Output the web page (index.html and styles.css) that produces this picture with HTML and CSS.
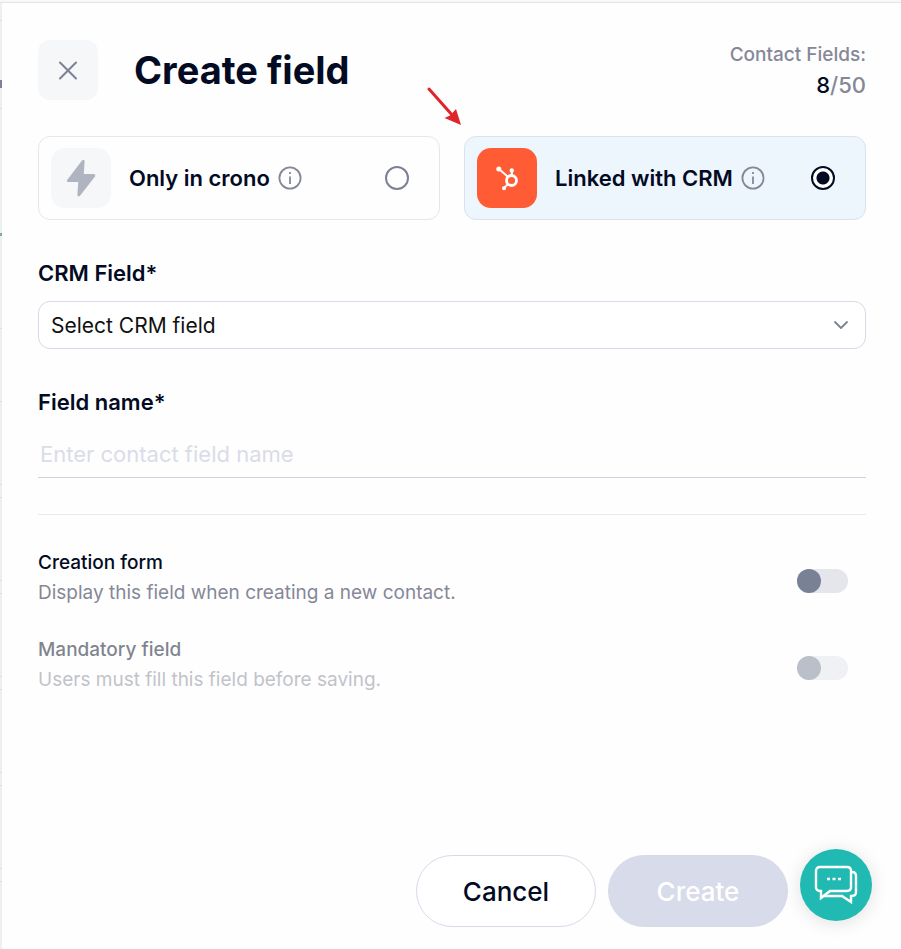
FILE: index.html
```html
<!DOCTYPE html>
<html lang="en">
<head>
<meta charset="utf-8">
<meta name="viewport" content="width=device-width, initial-scale=1">
<title>Create field</title>
<link rel="stylesheet" href="styles.css">
</head>
<body>
<div class="backdrop">
  <form class="panel">
    <header class="header">
      <button class="close" type="button" aria-label="Close">
        <svg width="20" height="20" viewBox="0 0 20 20" fill="none" stroke="#7c8194" stroke-width="2" stroke-linecap="round"><path d="M2 2.500 18 18.500M18 2.500 2 18.500"/></svg>
      </button>
      <h1 class="title">Create field</h1>
      <div class="quota">
        <span class="quota-label">Contact Fields:</span>
        <span class="quota-value"><b class="quota-used">8</b>/50</span>
      </div>
    </header>

    <div class="options">
      <label class="option">
        <span class="tile">
          <svg width="32" height="40" viewBox="0 0 32 40"><path d="M17 2.400 2 22.200Q1.200 23.800 3 24H13.200L12.400 37Q13 39.400 15 37.800L30.200 18.200Q31 16.400 29 16H18.800L19.600 3Q18.800.600 17 2.400Z" fill="#b0b4c0"/></svg>
        </span>
        <span class="option-name">Only in crono</span>
        <svg class="info" width="24" height="24" viewBox="0 0 24 24" fill="none" stroke="#858897" stroke-width="1.800"><circle cx="12" cy="12" r="10.600"/><path d="M12 10.500V18M12 6V8"/></svg>
        <input class="radio" type="radio" name="source">
      </label>
      <label class="option option-active">
        <span class="tile tile-hubspot">
          <svg width="24" height="26" viewBox="0 0 24 26" fill="none" stroke="#fff" stroke-width="2"><circle cx="16.500" cy="15.500" r="5" stroke-width="2.800"/><path d="M4 4 12.800 11.700M16.800 5.500V10M12.800 19.200 9 23"/><g fill="#fff" stroke="none"><circle cx="3.800" cy="4" r="2.500"/><circle cx="16.800" cy="5.400" r="2.200"/><circle cx="9" cy="23.200" r="2"/></g></svg>
        </span>
        <span class="option-name">Linked with CRM</span>
        <svg class="info" width="24" height="24" viewBox="0 0 24 24" fill="none" stroke="#858897" stroke-width="1.800"><circle cx="12" cy="12" r="10.600"/><path d="M12 10.500V18M12 6V8"/></svg>
        <input class="radio" type="radio" name="source" checked>
      </label>
      <svg class="arrow" width="36" height="40" viewBox="0 0 36 40"><path d="M2 3 26 30" stroke="#e0252a" stroke-width="3" stroke-linecap="round"/><path d="M34 39 17.500 32 23 29.500 24.500 28 29 23Z" fill="#e0252a"/></svg>
    </div>

    <div class="field">
      <label class="field-label" for="crm-field">CRM Field*</label>
      <div class="select-box">
        <select class="select" id="crm-field"><option>Select CRM field</option></select>
        <svg class="chevron" width="16" height="10" viewBox="0 0 16 10" fill="none" stroke="#7c8194" stroke-width="1.800" stroke-linecap="round" stroke-linejoin="round"><path d="M2 2 8 8 14 2"/></svg>
      </div>
    </div>

    <div class="field">
      <label class="field-label" for="field-name">Field name*</label>
      <input class="input" id="field-name" type="text" placeholder="Enter contact field name">
    </div>

    <div class="settings">
      <label class="setting">
        <span class="setting-text">
          <span class="setting-name">Creation form</span>
          <span class="setting-note">Display this field when creating a new contact.</span>
        </span>
        <input class="switch" type="checkbox" role="switch">
      </label>
      <label class="setting setting-disabled">
        <span class="setting-text">
          <span class="setting-name">Mandatory field</span>
          <span class="setting-note">Users must fill this field before saving.</span>
        </span>
        <input class="switch" type="checkbox" role="switch" disabled>
      </label>
    </div>

    <footer class="footer">
      <button class="button" type="button">Cancel</button>
      <button class="button button-primary" type="submit" disabled>Create</button>
    </footer>
  </form>
</div>
<button class="chat" type="button" aria-label="Open chat">
  <svg width="44" height="40" viewBox="0 0 44 40" fill="none" stroke="#fff" stroke-width="2.400" stroke-linejoin="miter"><path d="M6 2H33Q37 2 37 6V22Q37 26 33 26H16L7 33V26H6Q2 26 2 22V6Q2 2 6 2Z"/><path d="M37 7H38Q42 7 42 11V27Q42 31 38 31H37V37L28 31H9.500"/><path d="M13 14H16M18.500 14H21.500M24 14H27" stroke-width="2.600"/></svg>
</button>
</body>
</html>
```

FILE: styles.css
```css
* {
  box-sizing: border-box;
}

body {
  margin: 0;
  color: #020b23;
  font-family: Inter, "Open Sans", sans-serif;
}

button,
input,
select {
  margin: 0;
  font: inherit;
}

/* Sliver of the dimmed page that shows beside the panel */
.backdrop {
  min-height: 100vh;
  padding: 3px 0 0 2px;
  display: flex;
  background:
    linear-gradient(#e9e2e4, #e9e2e4) 0 2px / 100% 1px no-repeat,
    linear-gradient(#f9f7f8, #f9f7f8) 0 0 / 100% 2px no-repeat,
    linear-gradient(#7c8194, #7c8194) 0 80px / 2px 8px no-repeat,
    linear-gradient(#7fa9a9, #7fa9a9) 0 233px / 2px 3px no-repeat,
    linear-gradient(#dedfe2, #dedfe2) 0 20px / 2px 1px no-repeat,
    linear-gradient(#dedfe2, #dedfe2) 0 108px / 2px 1px no-repeat,
    linear-gradient(#dedfe2, #dedfe2) 0 328px / 2px 1px no-repeat,
    linear-gradient(#dedfe2, #dedfe2) 0 401px / 2px 1px no-repeat,
    linear-gradient(#dedfe2, #dedfe2) 0 484px / 2px 1px no-repeat,
    linear-gradient(#dedfe2, #dedfe2) 0 497px / 2px 1px no-repeat,
    linear-gradient(#dedfe2, #dedfe2) 0 580px / 2px 1px no-repeat,
    linear-gradient(#dedfe2, #dedfe2) 0 593px / 2px 1px no-repeat,
    linear-gradient(#dedfe2, #dedfe2) 0 676px / 2px 1px no-repeat,
    linear-gradient(#dedfe2, #dedfe2) 0 689px / 2px 1px no-repeat,
    linear-gradient(#dedfe2, #dedfe2) 0 772px / 2px 1px no-repeat,
    linear-gradient(#dedfe2, #dedfe2) 0 785px / 2px 1px no-repeat,
    linear-gradient(#dedfe2, #dedfe2) 0 868px / 2px 1px no-repeat,
    linear-gradient(#dedfe2, #dedfe2) 0 881px / 2px 1px no-repeat,
    #efeff0;
}

.panel {
  flex: 1;
  min-width: 0;
  padding: 37px 35px 22px 36px;
  display: flex;
  flex-direction: column;
  background: #fefefe;
}

.header {
  display: flex;
  align-items: center;
  gap: 36px;
}

.close {
  width: 60px;
  height: 60px;
  padding: 0;
  display: grid;
  place-items: center;
  border: 0;
  border-radius: 12px;
  background: #f5f7f9;
}

.title {
  margin: 0;
  font-size: 38px;
  line-height: 60px;
  font-weight: 700;
}

.quota {
  margin-left: auto;
  display: grid;
  line-height: 30px;
  font-weight: 500;
  text-align: right;
  color: #858897;
}

.quota-label {
  font-size: 19px;
}

.quota-value {
  font-size: 22px;
}

.quota-used {
  font-weight: 500;
  color: #020b23;
}

.options {
  position: relative;
  margin-top: 36px;
  display: grid;
  grid-template-columns: 1fr 1fr;
  gap: 24px;
}

.option {
  padding: 11px 30px 11px 12px;
  display: flex;
  align-items: center;
  border: 1px solid #e6e7eb;
  border-radius: 12px;
}

.option-active {
  border-color: #dbe2ee;
  background: #edf5fd;
}

.tile {
  width: 60px;
  height: 60px;
  margin-right: 18px;
  display: grid;
  place-items: center;
  border-radius: 14px;
  background: #f5f7f9;
}

.tile-hubspot {
  background: #ff5c35;
}

.option-name {
  font-size: 22px;
  font-weight: 600;
}

.info {
  margin-left: 8px;
}

.radio {
  appearance: none;
  width: 24px;
  height: 24px;
  margin-left: auto;
  border: 2px solid #7c8194;
  border-radius: 50%;
  background: #fff;
}

.radio:checked {
  border-color: #020b23;
  background: radial-gradient(circle, #020b23 6px, #fff 7px);
}

.arrow {
  position: absolute;
  right: calc(50% - 11px);
  bottom: calc(100% + 10px);
}

.field {
  margin-top: 38px;
  display: grid;
  gap: 13px;
}

.field-label {
  font-size: 22px;
  line-height: 30px;
  font-weight: 600;
}

.select-box {
  display: grid;
  align-items: center;
}

.select,
.chevron {
  grid-area: 1 / 1;
}

.select {
  appearance: none;
  width: 100%;
  height: 48px;
  padding: 0 48px 0 12px;
  border: 1px solid #d8dae8;
  border-radius: 12px;
  background: #fff;
  color: #111;
  font-size: 21px;
}

.chevron {
  justify-self: end;
  margin-right: 17px;
  pointer-events: none;
}

.input {
  width: 100%;
  height: 48px;
  padding: 0 2px;
  border: 0;
  border-bottom: 1px solid #d0d2de;
  background: transparent;
  font-size: 22px;
}

.input::placeholder {
  color: #dadce8;
}

.settings {
  margin: 36px 0;
  padding-top: 33px;
  display: grid;
  gap: 27px;
  border-top: 1px solid #e8e9ed;
}

.setting {
  display: flex;
  align-items: center;
  justify-content: space-between;
  gap: 24px;
}

.setting-disabled {
  opacity: 0.5;
}

.setting-text {
  display: grid;
  font-size: 19px;
  line-height: 30px;
}

.setting-name {
  font-weight: 500;
}

.setting-note {
  color: #858897;
}

.switch {
  appearance: none;
  flex: none;
  width: 51px;
  height: 24px;
  margin: 6px 18px 0 0;
  border-radius: 12px;
  background: #e4e6eb;
}

.switch::before {
  content: "";
  display: block;
  width: 24px;
  height: 24px;
  border-radius: 50%;
  background: #788196;
}

.footer {
  margin: auto 78px 0 0;
  display: flex;
  justify-content: flex-end;
  gap: 12px;
}

.button {
  width: 180px;
  height: 72px;
  border: 1px solid #d8dae8;
  border-radius: 36px;
  background: #fff;
  color: #020b23;
  font-size: 26px;
  font-weight: 500;
}

.button-primary {
  background: #d8dbe9;
  color: #fff;
}

.chat {
  position: fixed;
  right: 29px;
  bottom: 28px;
  width: 72px;
  height: 72px;
  padding: 0;
  display: grid;
  place-items: center;
  border: 0;
  border-radius: 50%;
  background: #20bab2;
  box-shadow: 0 2px 18px rgba(0, 0, 0, 0.12);
}
```
